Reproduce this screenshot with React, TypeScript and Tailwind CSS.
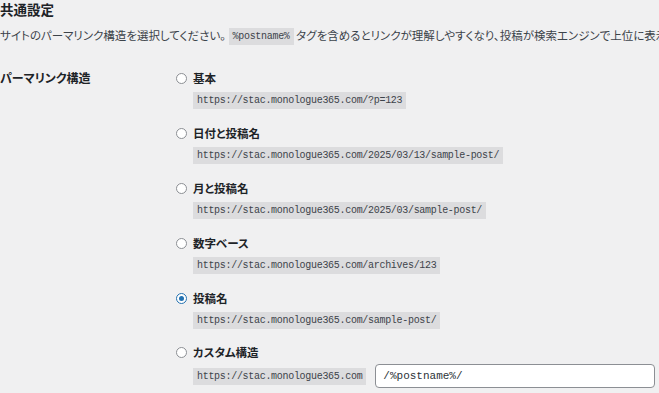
import React, { useState } from "react";

const jp = {
  fontFamily: '"Noto Sans CJK JP", "Noto Sans", sans-serif',
  fontFeatureSettings: '"palt"',
};
const mono = { fontFamily: '"Liberation Mono", monospace' };

const base = "https://stac.monologue365.com";

const options = [
  { id: "plain", label: "基本", code: base + "/?p=123" },
  { id: "day", label: "日付と投稿名", code: base + "/2025/03/13/sample-post/" },
  { id: "month", label: "月と投稿名", code: base + "/2025/03/sample-post/" },
  { id: "numeric", label: "数字ベース", code: base + "/archives/123" },
  { id: "post", label: "投稿名", code: base + "/sample-post/" },
];

function Code({ children }: { children: React.ReactNode }) {
  return (
    <code
      style={mono}
      className="inline-block bg-[#dcdcde] px-[4px] py-[1px] align-middle text-[10px] leading-[15px] tracking-[-0.3px] text-[#3c434a]"
    >
      {children}
    </code>
  );
}

function Radio({ checked, onClick }: { checked: boolean; onClick: () => void }) {
  return (
    <span
      onClick={onClick}
      className={`flex h-[11px] w-[11px] shrink-0 items-center justify-center rounded-full border bg-white ${
        checked ? "border-[#2271b1]" : "border-[#8c8f94]"
      }`}
    >
      {checked && <span className="h-[5px] w-[5px] rounded-full bg-[#2271b1]" />}
    </span>
  );
}

export default function App() {
  const [sel, setSel] = useState("post");

  return (
    <div style={jp} className="h-[393px] w-[659px] overflow-hidden bg-[#f0f0f1] text-[#1d2327]">
      <h2 className="text-[13.5px] font-bold leading-[18px]">共通設定</h2>
      <p className="mt-[8px] whitespace-nowrap text-[11.5px] leading-[18px] text-[#3c434a]">
        サイトのパーマリンク構造を選択してください。 <Code>%postname%</Code>{" "}
        タグを含めるとリンクが理解しやすくなり、投稿が検索エンジンで上位に表示されやすくなります。
      </p>

      <div className="mt-[24px] flex">
        <div className="w-[176px] shrink-0 text-[12px] font-bold leading-[18px]">パーマリンク構造</div>
        <div className="flex flex-col gap-[15px]">
          {options.map((o) => (
            <div key={o.id} className="flex flex-col gap-[5px]">
              <label className="flex h-[18px] items-center gap-[6px] text-[11.5px] font-bold leading-[18px]">
                <Radio checked={sel === o.id} onClick={() => setSel(o.id)} />
                {o.label}
              </label>
              <div className="flex pl-[17px] leading-none">
                <Code>{o.code}</Code>
              </div>
            </div>
          ))}
          <div className="-mt-[1px] flex flex-col gap-[3px]">
            <label className="flex h-[18px] items-center gap-[6px] text-[11.5px] font-bold leading-[18px]">
              <Radio checked={sel === "custom"} onClick={() => setSel("custom")} />
              カスタム構造
            </label>
            <div className="flex items-center gap-[9px] pl-[17px] leading-none">
              <Code>{base}</Code>
              <input
                style={mono}
                defaultValue="/%postname%/"
                className="h-[24px] w-[280px] rounded-[4px] border border-[#8c8f94] bg-white px-[7px] text-[11px] text-[#2c3338] outline-none"
              />
            </div>
          </div>
        </div>
      </div>
    </div>
  );
}
